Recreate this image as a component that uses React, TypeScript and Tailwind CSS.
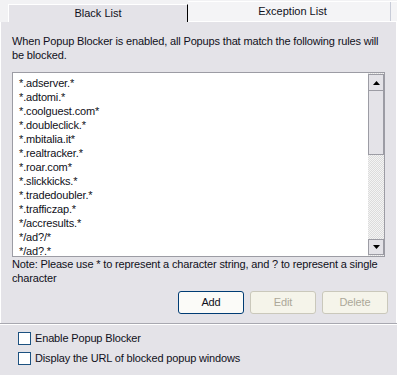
const rules = [
  '*.adserver.*',
  '*.adtomi.*',
  '*.coolguest.com*',
  '*.doubleclick.*',
  '*.mbitalia.it*',
  '*.realtracker.*',
  '*.roar.com*',
  '*.slickkicks.*',
  '*.tradedoubler.*',
  '*.trafficzap.*',
  '*/accresults.*',
  '*/ad?/*',
  '*/ad?.*',
];

function Checkbox({ label }: { label: string }) {
  return (
    <label className="flex items-center gap-[4px] h-[20px]">
      <span className="w-[13px] h-[13px] border border-[#1c5180] bg-white shrink-0" />
      <span>{label}</span>
    </label>
  );
}

export default function App() {
  return (
    <div
      className="w-[397px] h-[375px] flex flex-col bg-[#f2f2f4] text-[11px] tracking-[-0.15px] text-[#101020] overflow-hidden"
      style={{ fontFamily: '"Liberation Sans", Arial, sans-serif' }}
    >
      {/* tabs */}
      <div className="flex h-[22px] shrink-0 pl-[8px] tracking-normal">
        <div className="w-[180px] mt-[4px] bg-[#e4e3e8] border-t border-l border-white border-r border-r-black flex items-center justify-center">
          Black List
        </div>
        <div className="flex-1 mt-[1px] bg-[#f4f4f6] border-t border-white border-b border-b-white flex items-center justify-center relative">
          Exception List
          <span className="absolute right-[6px] top-0 bottom-0 w-px bg-[#c8ccd8]" />
        </div>
      </div>

      {/* panel */}
      <div className="flex-1 bg-[#e4e3e8] border-l border-r border-white flex flex-col">
        <p className="pl-[11px] pr-[4px] pt-[12px] leading-[14px]">
          When Popup Blocker is enabled, all Popups that match the following rules will be blocked.
        </p>

        <div className="mx-[11px] mt-[10px] h-[185px] border border-[#9c9ca4] bg-white flex">
          <div className="flex-1 overflow-hidden pl-[6px] pt-[3px]">
            {rules.map((r) => (
              <div key={r} className="h-[14px] leading-[14px] whitespace-nowrap">
                {r}
              </div>
            ))}
          </div>
          <div className="w-[17px] flex flex-col bg-[repeating-conic-gradient(#f4f4f4_0_25%,#dcdcdc_0_50%)] bg-[length:2px_2px] border-l border-white pt-[1px] pb-[1px]">
            <div className="h-[17px] bg-[#e4e3e8] border border-[#9c9ca4] flex items-center justify-center">
              <svg width="7" height="4" viewBox="0 0 7 4">
                <path d="M3.5 0 L7 4 L0 4 Z" fill="#000" />
              </svg>
            </div>
            <div className="h-[64px] bg-[#e4e3e8] border border-[#9c9ca4] border-t-0" />
            <div className="flex-1" />
            <div className="h-[16px] bg-[#e4e3e8] border border-[#9c9ca4] flex items-center justify-center">
              <svg width="7" height="4" viewBox="0 0 7 4">
                <path d="M0 0 L7 0 L3.5 4 Z" fill="#000" />
              </svg>
            </div>
          </div>
        </div>

        <p className="pl-[11px] pr-[4px] leading-[14px]">
          Note: Please use * to represent a character string, and ? to represent a single character
        </p>

        <div className="flex justify-end gap-[6px] pr-[8px] mt-[6px]">
          <button className="w-[66px] h-[23px] rounded-[3px] border border-[#003c74] bg-[#fbfbf8]">
            Add
          </button>
          <button className="w-[66px] h-[23px] rounded-[3px] border border-[#cac8bb] bg-[#f5f4ea] text-[#aca899]">
            Edit
          </button>
          <button className="w-[66px] h-[23px] rounded-[3px] border border-[#cac8bb] bg-[#f5f4ea] text-[#aca899]">
            Delete
          </button>
        </div>
        <div className="flex-1" />
      </div>

      {/* bottom options */}
      <div className="h-[52px] shrink-0 bg-[#e4e3e8] border-t border-[#a8a8b0] shadow-[inset_0_1px_0_#ffffff] pl-[18px] pt-[4px] flex flex-col">
        <Checkbox label="Enable Popup Blocker" />
        <Checkbox label="Display the URL of blocked popup windows" />
      </div>
    </div>
  );
}
